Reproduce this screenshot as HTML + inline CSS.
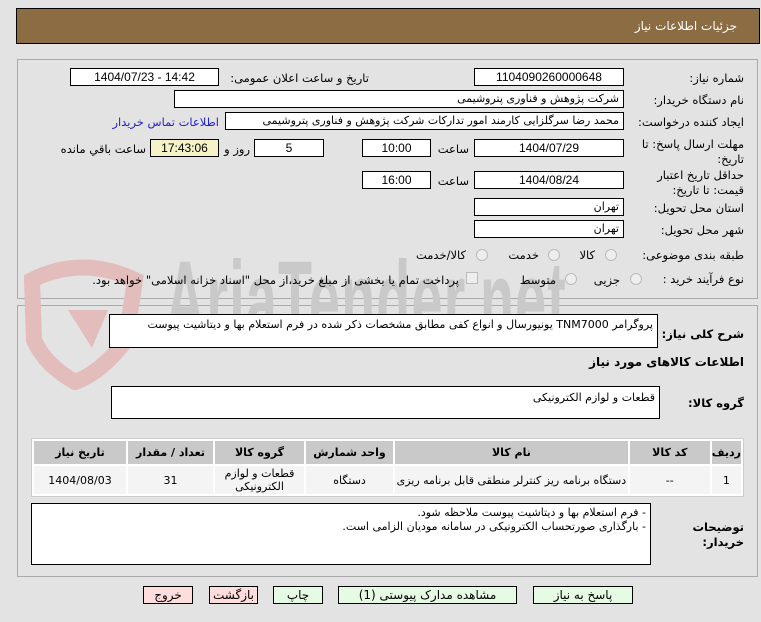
<!DOCTYPE html>
<html><head><meta charset="utf-8"><style>
*{box-sizing:border-box;margin:0;padding:0}
body{width:761px;height:622px;background:#e3e3e3;font-family:"DejaVu Sans","Liberation Sans",sans-serif;font-size:11px;color:#000;position:relative;overflow:hidden}
.a{position:absolute}
.hdr{left:16px;top:8px;width:744px;height:36px;background:#8c6c43;border:1px solid #000}
.hdr span{position:absolute;right:22px;top:10px;color:#fff;font-size:12px}
.pn{border:1px solid #aaa}
.box{position:absolute;background:#fff;border:1px solid #000;height:18px;line-height:16px;text-align:center;font-size:12px;font-family:"Liberation Sans","DejaVu Sans",sans-serif}
.tx{position:absolute;direction:rtl;white-space:nowrap;font-size:11.5px}
.rt{text-align:right;padding-right:4px;font-family:"DejaVu Sans",sans-serif;font-size:11px;direction:rtl}
.rad{position:absolute;width:12px;height:12px;border-radius:50%;border:1px solid #bbb;background:#eee}
table{border-collapse:separate;border-spacing:2px;background:#fff;border:1px solid #ccc}
td{text-align:center;font-size:11px}
th{background:#c9c9c9;font-weight:bold;height:23px;font-size:11px}
td{background:#f4f4f4;height:28px}
.btn{position:absolute;top:586px;height:18px;border:1px solid #000;text-align:center;font-size:12px;line-height:16px;background:#e6fbe3}
.wm{font-family:"Liberation Sans",sans-serif;font-weight:bold;color:#c9c9c9;font-size:96px;letter-spacing:2px;white-space:nowrap;transform:scale(0.58,1.15);transform-origin:left top}
</style></head><body>
<div class="a hdr"><span>جزئیات اطلاعات نیاز</span></div>
<div class="a pn" style="left:17px;top:59px;width:741px;height:240px"></div>
<div class="a pn" style="left:17px;top:305px;width:741px;height:272px"></div>
<svg class="a" style="left:20px;top:250px" width="130" height="140"><path d="M12 30 Q62 5 115 30 L106 90 Q82 122 55 132 Q25 115 14 90 Z" fill="none" stroke="#e3bcbc" stroke-width="16"/><path d="M48 60 L88 60 L72 98 Z" fill="#e3bcbc"/></svg>
<div class="a wm" style="left:165px;top:238px">AriaTender.net</div>

<div class="tx" style="right:17px;top:71px">شماره نیاز:</div>
<div class="box" style="left:474px;top:68px;width:150px">1104090260000648</div>
<div class="tx" style="right:392px;top:71px">تاریخ و ساعت اعلان عمومی:</div>
<div class="box" style="left:70px;top:68px;width:149px">1404/07/23 - 14:42</div>

<div class="tx" style="right:17px;top:93px">نام دستگاه خریدار:</div>
<div class="box rt" style="left:174px;top:90px;width:450px">شرکت پژوهش و فناوری پتروشیمی</div>

<div class="tx" style="right:17px;top:115px">ایجاد کننده درخواست:</div>
<div class="box rt" style="left:225px;top:112px;width:399px">محمد رضا سرگلزایی کارمند امور تدارکات شرکت پژوهش و فناوری پتروشیمی</div>
<div class="tx" style="right:542px;top:115px;color:#2222cc">اطلاعات تماس خریدار</div>

<div class="tx" style="right:17px;top:137px">مهلت ارسال پاسخ: تا</div>
<div class="tx" style="right:17px;top:152px">تاریخ:</div>
<div class="box" style="left:474px;top:139px;width:150px">1404/07/29</div>
<div class="tx" style="right:292px;top:142px">ساعت</div>
<div class="box" style="left:362px;top:139px;width:69px">10:00</div>
<div class="box" style="left:254px;top:139px;width:70px">5</div>
<div class="tx" style="right:511px;top:142px">روز و</div>
<div class="box" style="left:150px;top:139px;width:69px;background:#f4f2c6">17:43:06</div>
<div class="tx" style="right:615px;top:142px">ساعت باقي مانده</div>

<div class="tx" style="right:17px;top:168px">حداقل تاریخ اعتبار</div>
<div class="tx" style="right:17px;top:183px">قیمت: تا تاریخ:</div>
<div class="box" style="left:474px;top:171px;width:150px">1404/08/24</div>
<div class="tx" style="right:292px;top:174px">ساعت</div>
<div class="box" style="left:362px;top:171px;width:69px">16:00</div>

<div class="tx" style="right:17px;top:201px">استان محل تحویل:</div>
<div class="box rt" style="left:474px;top:198px;width:150px">تهران</div>
<div class="tx" style="right:17px;top:223px">شهر محل تحویل:</div>
<div class="box rt" style="left:474px;top:220px;width:150px">تهران</div>

<div class="tx" style="right:17px;top:248px">طبقه بندی موضوعی:</div>
<div class="rad" style="left:605px;top:249px"></div><div class="tx" style="right:166px;top:248px">کالا</div>
<div class="rad" style="left:548px;top:249px"></div><div class="tx" style="right:222px;top:248px">خدمت</div>
<div class="rad" style="left:476px;top:249px"></div><div class="tx" style="right:295px;top:248px">کالا/خدمت</div>

<div class="tx" style="right:17px;top:272px">نوع فرآیند خرید :</div>
<div class="rad" style="left:630px;top:273px"></div><div class="tx" style="right:141px;top:273px">جزیی</div>
<div class="rad" style="left:565px;top:273px"></div><div class="tx" style="right:205px;top:273px">متوسط</div>
<div class="a" style="left:466px;top:272px;width:12px;height:12px;border:1px solid #bbb;background:#eee"></div>
<div class="tx" style="right:302px;top:273px">پرداخت تمام یا بخشی از مبلغ خرید،از محل "اسناد خزانه اسلامی" خواهد بود.</div>

<div class="tx" style="right:17px;top:327px;font-weight:bold">شرح کلی نیاز:</div>
<div class="box rt" style="left:109px;top:314px;width:549px;height:34px;line-height:20px;overflow:hidden">پروگرامر TNM7000 یونیورسال و انواع کفی مطابق مشخصات ذکر شده در فرم استعلام بها و دیتاشیت پیوست</div>
<div class="tx" style="right:17px;top:355px;font-weight:bold;font-size:12px">اطلاعات کالاهای مورد نیاز</div>
<div class="tx" style="right:17px;top:396px;font-weight:bold">گروه کالا:</div>
<div class="box rt" style="left:111px;top:386px;width:549px;height:33px;line-height:22px">قطعات و لوازم الکترونیکی</div>

<table class="a" style="left:31px;top:438px;width:713px;direction:rtl">
<tr><th style="width:28px">ردیف</th><th style="width:80px">کد کالا</th><th>نام کالا</th><th style="width:87px">واحد شمارش</th><th style="width:89px">گروه کالا</th><th style="width:85px">تعداد / مقدار</th><th style="width:92px">تاریخ نیاز</th></tr>
<tr><td>1</td><td>--</td><td>دستگاه برنامه ریز کنترلر منطقی قابل برنامه ریزی</td><td>دستگاه</td><td style="line-height:13px">قطعات و لوازم<br>الکترونیکی</td><td>31</td><td>1404/08/03</td></tr>
</table>

<div class="tx" style="right:17px;top:520px;font-weight:bold">توضیحات</div>
<div class="tx" style="right:17px;top:535px;font-weight:bold">خریدار:</div>
<div class="box rt" style="left:31px;top:503px;width:620px;height:62px;line-height:14px;padding-top:2px">- فرم استعلام بها و دیتاشیت پیوست ملاحظه شود.<br>- بارگذاری صورتحساب الکترونیکی در سامانه مودیان الزامی است.</div>

<div class="btn" style="left:533px;width:100px">پاسخ به نیاز</div>
<div class="btn" style="left:338px;width:179px">مشاهده مدارک پیوستی (1)</div>
<div class="btn" style="left:273px;width:50px">چاپ</div>
<div class="btn" style="left:209px;width:49px;background:#fdd">بازگشت</div>
<div class="btn" style="left:143px;width:50px;background:#fdd">خروج</div>
</body></html>
